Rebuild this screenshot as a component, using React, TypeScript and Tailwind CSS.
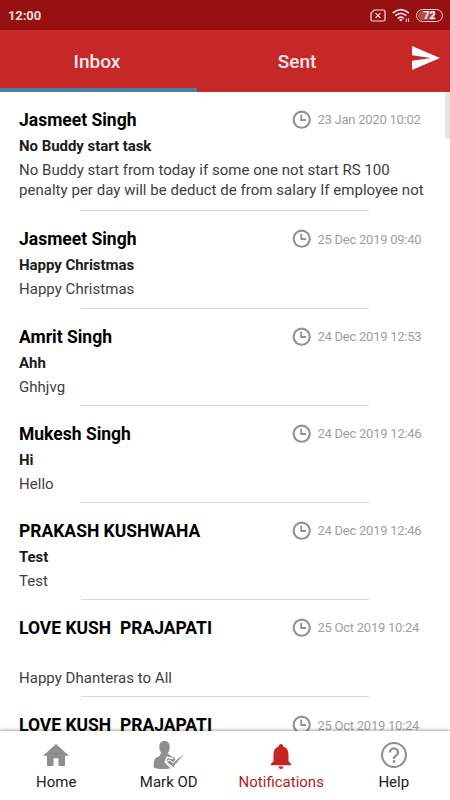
import type { ReactNode } from "react";

interface Message {
  name: string;
  date: string;
  subject: string;
  lines: string[];
}

const messages: Message[] = [
  {
    name: "Jasmeet Singh",
    date: "23 Jan 2020 10:02",
    subject: "No Buddy start task",
    lines: [
      "No Buddy start from today if some one not start RS 100",
      "penalty per day will be deduct de from salary If employee not",
    ],
  },
  { name: "Jasmeet Singh", date: "25 Dec 2019 09:40", subject: "Happy Christmas", lines: ["Happy Christmas"] },
  { name: "Amrit Singh", date: "24 Dec 2019 12:53", subject: "Ahh", lines: ["Ghhjvg"] },
  { name: "Mukesh Singh", date: "24 Dec 2019 12:46", subject: "Hi", lines: ["Hello"] },
  { name: "PRAKASH KUSHWAHA", date: "24 Dec 2019 12:46", subject: "Test", lines: ["Test"] },
  { name: "LOVE KUSH  PRAJAPATI", date: "25 Oct 2019 10:24", subject: "", lines: ["Happy Dhanteras to All"] },
  { name: "LOVE KUSH  PRAJAPATI", date: "25 Oct 2019 10:24", subject: "", lines: [] },
];

function StatusBar() {
  return (
    <div className="flex h-[30px] shrink-0 items-center justify-between bg-[#961012] pl-2 pr-[7px] text-[#f8dede]">
      <span className="text-[13px] font-bold leading-none tracking-[-0.1px]">12:00</span>
      <div className="flex items-center">
        <svg width="16" height="13" viewBox="0 0 16 13" fill="none" stroke="currentColor" strokeWidth="1.2">
          <path d="M4.2 1H13.5Q15 1 15 2.5V10.5Q15 12 13.5 12H2.5Q1 12 1 10.5V4.2Z" />
          <path d="M5.6 4.1l4.8 4.8M10.4 4.1l-4.8 4.8" />
        </svg>
        <svg className="ml-[6px]" width="18" height="15" viewBox="0 0 18 15" fill="none" stroke="currentColor" strokeWidth="1.7">
          <path d="M.8 5Q8.8-1.8 16.8 5M3.3 7.7Q8.8 3.1 14.3 7.7M5.8 10.3Q8.8 7.8 11.8 10.3" />
          <path d="M7 11.7Q8.8 10.5 10.6 11.7L8.8 13.6Z" fill="currentColor" stroke="none" />
          <path d="M14.3 10.5v3.5M16.6 10.5v3.5" strokeWidth="1" />
        </svg>
        <div className="ml-[6px] flex h-[13px] w-[27px] items-center justify-center rounded-full border border-[#f3cccc] p-px">
          <span className="flex h-full w-full items-center justify-center rounded-full bg-linear-to-r from-[#b14b4d] from-76% to-[#961012] to-76% text-[11px] font-bold leading-none text-white">
            72
          </span>
        </div>
      </div>
    </div>
  );
}

function Header() {
  return (
    <div className="flex h-[62px] shrink-0 bg-[#c62828] text-[19px] font-medium text-[#fdeaea]">
      <div className="flex w-[197px] flex-col">
        <div className="flex flex-1 items-center justify-center pt-[6px] pr-[3px]">Inbox</div>
        <div className="h-1 bg-[#4682aa]" />
      </div>
      <div className="flex w-[200px] items-center justify-center pt-[2px]">Sent</div>
      <svg className="mt-4 ml-[15px]" width="28" height="24" viewBox="0 0 28 24" fill="white">
        <path d="M0 0L28 12L0 24V14.7L19 12L0 9.3Z" />
      </svg>
    </div>
  );
}

function ClockIcon() {
  return (
    <svg width="20" height="20" viewBox="0 0 20 20" fill="none" stroke="#929292" strokeWidth="2.1">
      <circle cx="9.7" cy="9.7" r="8.1" />
      <path d="M9.2 4.8V10H14" strokeWidth="1.8" />
    </svg>
  );
}

function MessageRow({ message }: { message: Message }) {
  return (
    <div className={`flex shrink-0 flex-col pl-[19px] ${message.lines.length > 1 ? "h-[119.2px]" : "h-[97.2px]"}`}>
      <div className="mt-[17px] flex h-[22px] items-center">
        <span className="w-[273px] whitespace-pre text-[17.5px] font-bold leading-[22px] text-black">{message.name}</span>
        <ClockIcon />
        <span className="ml-[5.5px] whitespace-nowrap text-[13px] tracking-[-0.25px] text-[#a0a0a0]">{message.date}</span>
      </div>
      <div className="mt-[5px] h-5 text-[15px] font-bold leading-5 tracking-[-0.05px] text-[#1c1c1c]">
        {message.subject}
      </div>
      <div className="mt-[4px] text-[15px] leading-5 tracking-[0.03px] text-[#404040]">
        {message.lines.map((line) => (
          <p key={line} className="whitespace-nowrap">{line}</p>
        ))}
      </div>
      <div className="mt-auto ml-[62px] h-px w-[288px] bg-[#d8d8d8]" />
    </div>
  );
}

function NavItem({ label, active, children }: { label: string; active?: boolean; children: ReactNode }) {
  return (
    <div className="flex w-1/4 flex-col items-center pt-[9px]">
      <div className="flex h-[30px] items-center justify-center">{children}</div>
      <span className={`mt-[2px] text-[15px] leading-5 ${active ? "text-[#b71c1c]" : "text-[#222]"}`}>{label}</span>
    </div>
  );
}

function BottomNav() {
  return (
    <div className="z-10 flex h-[69px] shrink-0 bg-white shadow-[0_-1px_3px_rgba(0,0,0,0.35)]">
      <NavItem label="Home">
        <svg width="26" height="22" viewBox="0 0 26 22" fill="#8f8f8f">
          <path d="M13 0L26 11.7H22V22H15.5V14.3H10.5V22H4V11.7H0Z" />
        </svg>
      </NavItem>
      <NavItem label="Mark OD">
        <svg width="32" height="30" viewBox="0 0 32 30" fill="#8f8f8f">
          <path d="M11.5 1C15.2 1 16.9 3.7 16.7 7.6C16.5 11.4 14.2 15.2 11.5 15.2S6.5 11.4 6.3 7.6C6.1 3.7 7.8 1 11.5 1Z" />
          <path d="M7.6 13.4H15.4Q16 15.4 21.2 17.2L22.6 19.8V26Q19 29 11.5 29Q4 29 .6 27.4C.8 21.5.6 18.5 4.6 17Q7.4 16 7.6 13.4Z" />
          {/* white outline separates the tick from the shoulder */}
          <path d="M12.2 22L14 17.5L20.5 18.5M12.2 22L19 29" fill="none" stroke="white" strokeWidth="1.6" />
          <path
            d="M13.8 22.2L16.8 20.6L20.1 23.4Q25 17.6 31.4 14.6Q25.2 19.6 20.4 27.6Q17.8 24 13.8 22.2Z"
            stroke="white"
            strokeWidth="2"
            paintOrder="stroke"
          />
          <path d="M22.8 22.8V28L19.6 29.6L20.5 27.3Z" fill="white" />
        </svg>
      </NavItem>
      <NavItem label="Notifications" active>
        <svg className="mt-[3px]" width="22" height="25" viewBox="0 0 22 26" preserveAspectRatio="none" fill="#c62323">
          <path d="M11 0C12.5 0 13.2 1 13.2 2.5C17 3.6 18.5 7 18.5 11V18L21.2 20.7V22H.8V20.7L3.5 18V11C3.5 7 5 3.6 8.8 2.5C8.8 1 9.5 0 11 0Z" />
          <path d="M8.4 23.3H13.6Q13.1 26 11 26T8.4 23.3Z" />
        </svg>
      </NavItem>
      <NavItem label="Help">
        <svg width="26" height="26" viewBox="2 2 20 20" fill="#8f8f8f">
          <path d="M11 18h2v-2h-2v2zm1-16C6.48 2 2 6.48 2 12s4.48 10 10 10 10-4.48 10-10S17.52 2 12 2zm0 18.4a8.4 8.4 0 1 1 0-16.8 8.4 8.4 0 0 1 0 16.8zM12 6a4 4 0 0 0-4 4h1.8a2.2 2.2 0 1 1 4.4 0c0 2-3.1 1.75-3.1 5h1.8c0-2.25 3.1-2.5 3.1-5a4 4 0 0 0-4-4z" />
        </svg>
      </NavItem>
    </div>
  );
}

export default function App() {
  return (
    <div className="flex h-[800px] w-[450px] flex-col overflow-hidden bg-white font-['Roboto',sans-serif]">
      <StatusBar />
      <Header />
      <div className="flex h-[639px] shrink-0 overflow-hidden">
        <div className="flex h-full w-[445px] flex-col overflow-hidden pt-[0.2px]">
          {messages.map((message, i) => (
            <MessageRow key={i} message={message} />
          ))}
        </div>
        <div className="h-[47px] w-[5px] bg-[#e4e4e4]" />
      </div>
      <BottomNav />
    </div>
  );
}
